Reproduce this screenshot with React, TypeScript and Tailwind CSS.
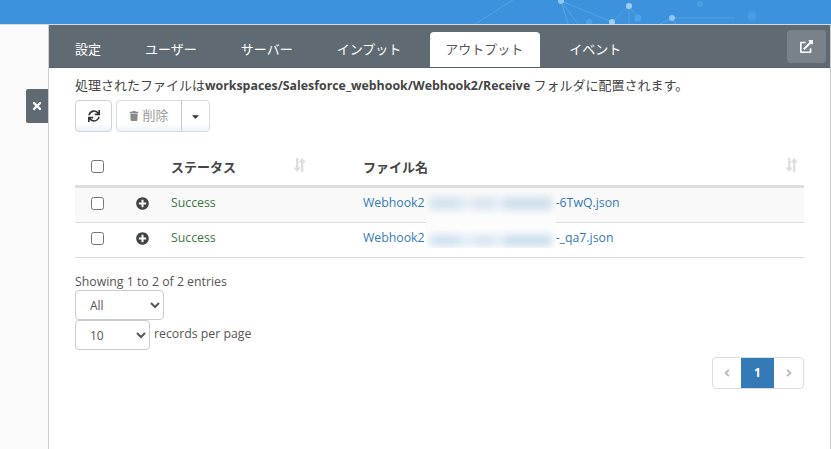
import React from "react";
import { FaSync, FaTrash, FaCaretDown, FaExternalLinkAlt, FaTimes, FaPlusCircle, FaAngleLeft, FaAngleRight } from "react-icons/fa";

const font = { fontFamily: '"Open Sans","Noto Sans CJK JP",sans-serif' };

function SortIcon() {
  return (
    <svg width="13" height="14" viewBox="0 0 13 14" className="text-[#dedede]" fill="currentColor">
      <path d="M3 0h2.4v9.5H8L4.2 14 .4 9.5H3z" />
      <path d="M8 4.5H5.4L9.2 0 13 4.5h-2.6V14H8z" />
    </svg>
  );
}

function Network() {
  const pts: [number, number, number, string][] = [
    [561, 1, 3, "#8fc6ee"], [629, 6, 3, "#9fd0f2"], [638, 18, 3.5, "#4aa6ea"], [612, 22, 3, "#9fd0f2"], [589, 22, 3, "#4aa6ea"],
    [700, 4, 3, "#4a9de0"], [672, 18, 3, "#8fc6ee"], [752, 16, 4.5, "#4a9de0"],
  ];
  return (
    <svg className="absolute inset-0" width="831" height="24" viewBox="0 0 831 24">
      <g stroke="#6fb2e8" strokeWidth="0.7" fill="none" opacity="0.75">
        <path d="M561 1L612 22L629 6L629 24M561 1L578 24M561 1L568 24M612 22L610 24M672 18L735 18M672 18L660 24M672 18L676 24M638 18L629 6M513 0L475 24" />
      </g>
      {pts.map(([x, y, r, c]) => (
        <circle key={`${x}-${y}`} cx={x} cy={y} r={r} fill={c} />
      ))}
    </svg>
  );
}

function Row({ end, odd }: { end: string; odd?: boolean }) {
  return (
    <div className={`flex h-[35px] items-center border-b border-[#dddddd] pb-[3px] text-[12.3px] ${odd ? "bg-[#f9f9f9]" : "bg-white"}`}>
      <div className="flex w-[61px] justify-start pl-[16px]">
        <span className="block h-[13px] w-[13px] rounded-[2.5px] border border-[#767676] bg-white" />
      </div>
      <div className="w-[35px]">
        <FaPlusCircle className="text-[13px] text-[#3f4448]" />
      </div>
      <div className="w-[192px] text-[#3c763d]">Success</div>
      <div className="flex items-center text-[#337ab7]">
        <span>Webhook2</span>
        <span className="w-[131px]" />
        <span>{end}</span>
      </div>
    </div>
  );
}

function Smear() {
  return (
    <div className="flex h-[11px] w-full blur-[4px]">
      <div className="w-[30px] bg-[#cbdeed]" />
      <div className="w-[14px] bg-[#e2ecf4]" />
      <div className="w-[20px] bg-[#d3e2ef]" />
      <div className="w-[10px] bg-[#e2ecf4]" />
      <div className="flex-1 bg-[#c6daeb]" />
    </div>
  );
}

export default function App() {
  return (
    <div className="flex h-[449px] w-[831px] flex-col overflow-hidden bg-white text-[#333]" style={font}>
      <header className="relative h-[24px] shrink-0 overflow-hidden bg-[#3c92dc]">
        <Network />
      </header>
      <div className="flex min-h-0 flex-1 border-t border-[#d9d9d9]">
        <aside className="w-[48px] shrink-0 bg-[#fafafa] pt-[64px]">
          <button className="ml-[26px] flex h-[34px] w-[22px] items-center justify-center rounded-l-[2px] bg-[#5f6a72] text-[12px] text-white">
            <FaTimes />
          </button>
        </aside>
        <main className="flex min-w-0 flex-1 flex-col border-x border-x-[#cfcfcf] border-r-[#c8c8c8] bg-white">
          <nav className="relative flex h-[43px] shrink-0 items-end gap-[14px] border-b border-[#56616a] bg-[#5f6a72] pl-[11px] text-[13px] text-white">
            <span className="flex h-[35px] items-center px-[15px] pt-[1px]">設定</span>
            <span className="flex h-[35px] items-center px-[15px] pt-[1px]">ユーザー</span>
            <span className="flex h-[35px] items-center px-[15px] pt-[1px]">サーバー</span>
            <span className="flex h-[35px] items-center px-[15px] pt-[1px]">インプット</span>
            <span className="flex h-[35px] items-center rounded-t-[4px] bg-white pl-[15px] pr-[17px] pt-[1px] text-[#555]">アウトプット</span>
            <span className="flex h-[35px] items-center px-[15px] pt-[1px]">イベント</span>
            <button className="absolute right-[4px] top-[5px] flex h-[33px] w-[39px] items-center justify-center rounded-[4px] bg-[#79828b] text-[13px] text-white">
              <FaExternalLinkAlt />
            </button>
          </nav>
          <div className="relative flex-1 pl-[26px] pr-[26px]">
            <p className="mt-[8px] h-[18px] whitespace-nowrap text-[13px] leading-[18px] text-[#444]">
              処理されたファイルは<b className="text-[12.35px] font-bold">workspaces/Salesforce_webhook/Webhook2/Receive</b> フォルダに配置されます。
            </p>
            <div className="mt-[6px] flex gap-[4px]">
              <button className="flex h-[32px] w-[37px] items-center justify-center rounded-[4px] border border-[#cfd3d6] bg-linear-to-b from-white from-75% to-[#e8f1f8] text-[12px] text-[#333]">
                <FaSync />
              </button>
              <div className="flex h-[32px] w-[94px] rounded-[4px] border border-[#d8dadc] bg-linear-to-b from-white from-75% to-[#eef4f9]">
                <span className="flex w-[65px] items-center justify-center gap-[3px] border-r border-[#c5c9cc] text-[13px] text-[#9a9a9a]">
                  <FaTrash className="text-[10px] text-[#8a8a8a]" />
                  削除
                </span>
                <span className="flex flex-1 items-center justify-center text-[11px] text-[#333]">
                  <FaCaretDown />
                </span>
              </div>
            </div>
            <div className="mt-[19px] w-[729px]">
              <div className="flex h-[37px] items-center border-b-[3px] border-[#dddddd] text-[13px] font-semibold text-[#444]">
                <div className="w-[96px] pl-[16px]">
                  <span className="mb-[3px] block h-[13px] w-[13px] rounded-[2.5px] border border-[#767676] bg-white" />
                </div>
                <div className="flex w-[192px] items-center">
                  <span className="w-[122px]">ステータス</span>
                  <span className="-mt-[6px]"><SortIcon /></span>
                </div>
                <div className="flex flex-1 items-center justify-between pr-[6px]">
                  <span>ファイル名</span>
                  <span className="-mt-[6px]"><SortIcon /></span>
                </div>
              </div>
              <div className="relative">
                <Row odd end="-6TwQ.json" />
                <Row end="-_qa7.json" />
                <div className="absolute left-[351px] top-[4px] flex h-[56px] w-[130px] flex-col justify-between overflow-hidden bg-linear-to-b from-[#f9f9f9] to-white px-[4px] pb-[2px] pt-[6px]">
                  <Smear />
                  <Smear />
                </div>
              </div>
            </div>
            <p className="mt-[15px] h-[17px] text-[12.3px] leading-[17px] text-[#555]">Showing 1 to 2 of 2 entries</p>
            <select className="block h-[30px] w-[89px] rounded-[4px] border border-[#cccccc] bg-white pl-[10px] text-[12px] text-[#555]" style={font}>
              <option>All</option>
            </select>
            <div className="flex items-center gap-[4px] text-[12.3px] text-[#555]">
              <select className="block h-[30px] w-[75px] rounded-[4px] border border-[#cccccc] bg-white pl-[10px] text-[12px] text-[#555]" style={font}>
                <option>10</option>
              </select>
              <span className="-mt-[2px]">records per page</span>
            </div>
            <div className="mt-[7px] flex w-[729px] justify-end">
              <div className="flex h-[32px] w-[92px] overflow-hidden rounded-[4px] border border-[#dddddd] text-[12px]">
                <span className="flex w-[28px] items-center justify-center text-[#bbbbbb]"><FaAngleLeft /></span>
                <span className="flex w-[33px] items-center justify-center bg-[#337ab7] font-bold text-white">1</span>
                <span className="flex flex-1 items-center justify-center text-[#bbbbbb]"><FaAngleRight /></span>
              </div>
            </div>
          </div>
        </main>
      </div>
    </div>
  );
}
